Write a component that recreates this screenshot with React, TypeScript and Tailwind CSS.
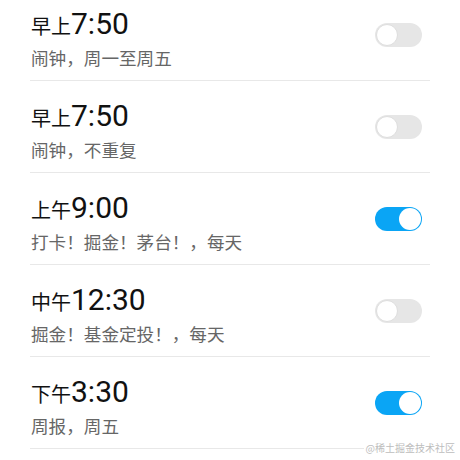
import React from "react";

type Alarm = { period: string; time: string; desc: string; on: boolean };

const alarms: Alarm[] = [
  { period: "早上", time: "7:50", desc: "闹钟，周一至周五", on: false },
  { period: "早上", time: "7:50", desc: "闹钟，不重复", on: false },
  { period: "上午", time: "9:00", desc: "打卡！掘金！茅台！，每天", on: true },
  { period: "中午", time: "12:30", desc: "掘金！基金定投！，每天", on: false },
  { period: "下午", time: "3:30", desc: "周报，周五", on: true },
];

function Toggle({ on }: { on: boolean }) {
  return on ? (
    <div className="flex h-[24px] w-[47px] items-center justify-end rounded-full bg-[#0aa5f5] p-[1px]">
      <div className="h-[22px] w-[22px] rounded-full bg-white" />
    </div>
  ) : (
    <div className="flex h-[24px] w-[47px] items-center justify-start rounded-full bg-[#e6e6e6] p-[1px]">
      <div className="h-[22px] w-[22px] rounded-full border border-[#dedede] bg-white" />
    </div>
  );
}

export default function App() {
  return (
    <div
      className="relative h-[460px] w-[460px] overflow-hidden bg-white"
      style={{ fontFamily: "Roboto, 'Noto Sans CJK SC', sans-serif" }}
    >
      <div className="-mt-[11px] mx-[30px] flex flex-col">
        {alarms.map((a, i) => (
          <div
            key={i}
            className="box-border flex h-[92px] items-center justify-between border-b border-[#e8e8e8] pl-[1px] pr-[8px]"
          >
            <div className="flex flex-col self-start pt-[17px]">
              <div className="flex items-baseline leading-[36px] text-[#111]">
                <span className="text-[20px]" style={{ fontFamily: "'Noto Sans CJK SC', sans-serif" }}>
                  {a.period}
                </span>
                <span className="text-[30px]" style={{ fontFamily: "Roboto, sans-serif" }}>
                  {a.time}
                </span>
              </div>
              <div
                className="mt-[2px] text-[17.6px] leading-[24px] text-[#666]"
                style={{ fontFamily: "'Noto Sans CJK SC', sans-serif" }}
              >
                {a.desc}
              </div>
            </div>
            <Toggle on={a.on} />
          </div>
        ))}
      </div>
      <div
        className="absolute bottom-[5px] right-[5px] bg-white pl-[2px] text-[10px] leading-[14px] text-[#bdbdbd]"
        style={{ fontFamily: "'Noto Sans CJK SC', sans-serif" }}
      >
        @稀土掘金技术社区
      </div>
    </div>
  );
}
